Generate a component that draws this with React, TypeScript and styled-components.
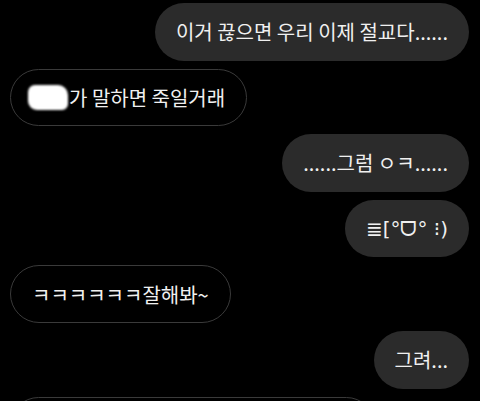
import React from "react";
import styled, { createGlobalStyle } from "styled-components";

const Global = createGlobalStyle`
  html, body { margin: 0; padding: 0; background: #000; }
  body { overflow: hidden; }
`;

const Screen = styled.div`
  width: 480px;
  height: 401px;
  overflow: hidden;
  background: #000;
  box-sizing: border-box;
  padding: 3px 11px 0 10px;
  display: flex;
  flex-direction: column;
  gap: 8px;
  font-family: "Noto Sans CJK KR", "Noto Sans", "DejaVu Sans", sans-serif;
`;

const Row = styled.div<{ $mine?: boolean }>`
  display: flex;
  justify-content: ${(p) => (p.$mine ? "flex-end" : "flex-start")};
  flex-shrink: 0;
`;

const Bubble = styled.div<{ $mine?: boolean; $w?: number }>`
  box-sizing: border-box;
  height: 57.6px;
  padding: 0 21px;
  display: flex;
  align-items: center;
  border-radius: 29px;
  font-size: 20px;
  color: #f0f0f0;
  white-space: nowrap;
  width: ${(p) => (p.$w ? `${p.$w}px` : "auto")};
  background: ${(p) => (p.$mine ? "#2b2b2b" : "#000")};
  border: ${(p) => (p.$mine ? "none" : "1px solid #3a3a3a")};
`;

const Redacted = styled.span`
  display: inline-block;
  width: 40px;
  height: 25px;
  background: #fff;
  border-radius: 7px 10px 6px 9px;
  filter: blur(1px);
  margin-left: -4px;
  margin-right: 1px;
`;

const Kao = styled.span`
  font-family: "DejaVu Sans", "Noto Sans CJK KR", sans-serif;
  font-size: 20px;
`;

export default function App() {
  return (
    <>
      <Global />
      <Screen>
        <Row $mine>
          <Bubble $mine>이거 끊으면 우리 이제 절교다......</Bubble>
        </Row>
        <Row>
          <Bubble>
            <Redacted />가 말하면 죽일거래
          </Bubble>
        </Row>
        <Row $mine>
          <Bubble $mine>......그럼 ㅇㅋ......</Bubble>
        </Row>
        <Row $mine>
          <Bubble $mine>
            <Kao>≣[°ᗜ° ⁝)</Kao>
          </Bubble>
        </Row>
        <Row>
          <Bubble>ㅋㅋㅋㅋㅋㅋ잘해봐~</Bubble>
        </Row>
        <Row $mine>
          <Bubble $mine>그려...</Bubble>
        </Row>
        <Row>
          <Bubble $w={365} />
        </Row>
      </Screen>
    </>
  );
}
